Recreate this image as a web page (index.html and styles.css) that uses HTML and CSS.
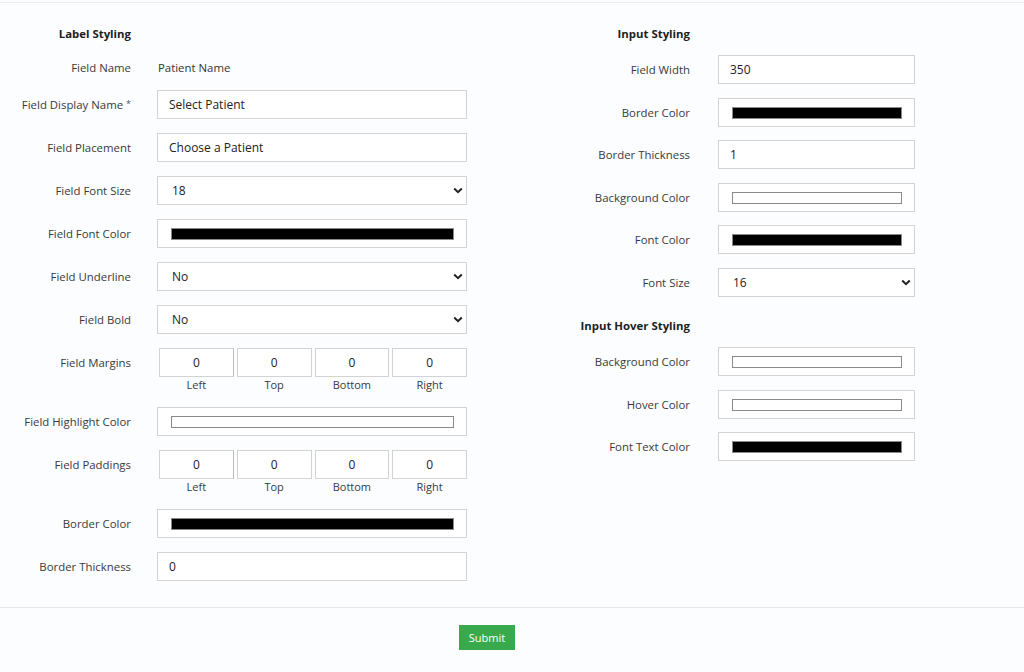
FILE: index.html
```html
<!DOCTYPE html>
<html lang="en">
<head>
    <meta charset="UTF-8">
    <title>Field Styling</title>
    <link rel="stylesheet" href="styles.css">
</head>
<body>
    <div class="page">
        <form class="styling-form">
            <div class="columns">
                <!-- label styling -->
                <div class="column left">
                    <div class="row heading-row">
                        <h3 class="heading">Label Styling</h3>
                    </div>
                    <div class="row name-row">
                        <label>Field Name</label>
                        <span class="static-value">Patient Name</span>
                    </div>
                    <div class="row">
                        <label>Field Display Name <span class="req">*</span></label>
                        <input type="text" class="text-input" value="Select Patient">
                    </div>
                    <div class="row">
                        <label>Field Placement</label>
                        <input type="text" class="text-input" value="Choose a Patient">
                    </div>
                    <div class="row">
                        <label>Field Font Size</label>
                        <div class="select-box">
                            <select><option>18</option></select>
                            <svg class="chevron" width="10" height="7" viewBox="0 0 10 7"><path d="M1.2 1.5 L5 5.2 L8.8 1.5" fill="none" stroke="#222" stroke-width="2"/></svg>
                        </div>
                    </div>
                    <div class="row">
                        <label>Field Font Color</label>
                        <div class="color-box"><div class="swatch black"></div></div>
                    </div>
                    <div class="row">
                        <label>Field Underline</label>
                        <div class="select-box">
                            <select><option>No</option></select>
                            <svg class="chevron" width="10" height="7" viewBox="0 0 10 7"><path d="M1.2 1.5 L5 5.2 L8.8 1.5" fill="none" stroke="#222" stroke-width="2"/></svg>
                        </div>
                    </div>
                    <div class="row">
                        <label>Field Bold</label>
                        <div class="select-box">
                            <select><option>No</option></select>
                            <svg class="chevron" width="10" height="7" viewBox="0 0 10 7"><path d="M1.2 1.5 L5 5.2 L8.8 1.5" fill="none" stroke="#222" stroke-width="2"/></svg>
                        </div>
                    </div>
                    <div class="row multi-row">
                        <label>Field Margins</label>
                        <div class="quad">
                            <div class="quad-item"><input type="text" class="quad-input" value="0"><span>Left</span></div>
                            <div class="quad-item"><input type="text" class="quad-input" value="0"><span>Top</span></div>
                            <div class="quad-item"><input type="text" class="quad-input" value="0"><span>Bottom</span></div>
                            <div class="quad-item"><input type="text" class="quad-input" value="0"><span>Right</span></div>
                        </div>
                    </div>
                    <div class="row">
                        <label>Field Highlight Color</label>
                        <div class="color-box"><div class="swatch white"></div></div>
                    </div>
                    <div class="row multi-row">
                        <label>Field Paddings</label>
                        <div class="quad">
                            <div class="quad-item"><input type="text" class="quad-input" value="0"><span>Left</span></div>
                            <div class="quad-item"><input type="text" class="quad-input" value="0"><span>Top</span></div>
                            <div class="quad-item"><input type="text" class="quad-input" value="0"><span>Bottom</span></div>
                            <div class="quad-item"><input type="text" class="quad-input" value="0"><span>Right</span></div>
                        </div>
                    </div>
                    <div class="row">
                        <label>Border Color</label>
                        <div class="color-box"><div class="swatch black"></div></div>
                    </div>
                    <div class="row">
                        <label>Border Thickness</label>
                        <input type="text" class="text-input" value="0">
                    </div>
                </div>

                <!-- input styling -->
                <div class="column right">
                    <div class="row heading-row">
                        <h3 class="heading">Input Styling</h3>
                    </div>
                    <div class="row">
                        <label>Field Width</label>
                        <input type="text" class="text-input" value="350">
                    </div>
                    <div class="row">
                        <label>Border Color</label>
                        <div class="color-box"><div class="swatch black"></div></div>
                    </div>
                    <div class="row">
                        <label>Border Thickness</label>
                        <input type="text" class="text-input" value="1">
                    </div>
                    <div class="row">
                        <label>Background Color</label>
                        <div class="color-box"><div class="swatch white"></div></div>
                    </div>
                    <div class="row">
                        <label>Font Color</label>
                        <div class="color-box"><div class="swatch black"></div></div>
                    </div>
                    <div class="row">
                        <label>Font Size</label>
                        <div class="select-box">
                            <select><option>16</option></select>
                            <svg class="chevron" width="10" height="7" viewBox="0 0 10 7"><path d="M1.2 1.5 L5 5.2 L8.8 1.5" fill="none" stroke="#222" stroke-width="2"/></svg>
                        </div>
                    </div>
                    <div class="row heading-row sub-heading">
                        <h3 class="heading">Input Hover Styling</h3>
                    </div>
                    <div class="row">
                        <label>Background Color</label>
                        <div class="color-box"><div class="swatch white"></div></div>
                    </div>
                    <div class="row">
                        <label>Hover Color</label>
                        <div class="color-box"><div class="swatch white"></div></div>
                    </div>
                    <div class="row">
                        <label>Font Text Color</label>
                        <div class="color-box"><div class="swatch black"></div></div>
                    </div>
                </div>
            </div>

            <div class="form-footer">
                <button type="button" class="submit-btn">Submit</button>
            </div>
        </form>
    </div>
</body>
</html>
```

FILE: styles.css
```css
* {
    box-sizing: border-box;
}

body {
    margin: 0;
    background: #fbfdfe;
    font-family: 'Open Sans', 'Noto Sans', sans-serif;
    font-size: 11.4px;
    color: #333;
}

.page {
    margin-top: 2px;
    border-top: 1px solid #eceff1;
    min-height: 670px;
}

.columns {
    display: grid;
    grid-template-columns: 467px 355px;
    column-gap: 93px;
    padding-top: 19px;
}

.column.left {
    --label-w: 131px;
    --field-w: 310px;
    --gap: 26px;
    --row-space: 14px;
}

.column.right {
    --label-w: 130px;
    --field-w: 197px;
    --gap: 28px;
    --row-space: 13.5px;
}

.row {
    display: grid;
    grid-template-columns: var(--label-w) var(--field-w);
    column-gap: var(--gap);
    align-items: center;
    margin-bottom: var(--row-space);
}

.row label {
    text-align: right;
    color: #3a3a3a;
    line-height: 29px;
    white-space: nowrap;
}

.req {
    font-size: 9px;
    vertical-align: 2px;
    color: #555;
}

.heading-row {
    height: 24px;
    margin-bottom: 9px;
}

.sub-heading {
    height: 28px;
    padding-top: 4px;
}

.heading {
    margin: 0;
    text-align: right;
    font-size: 11.4px;
    font-weight: 700;
    color: #1e1e1e;
    line-height: 24px;
}

.name-row {
    height: 25px;
    margin-bottom: 9px;
}

.name-row label {
    line-height: 25px;
}

.static-value {
    color: #333;
    padding-left: 1px;
}

.text-input,
.select-box select,
.quad-input {
    font-family: 'Open Sans', 'Noto Sans', sans-serif;
    font-size: 12px;
    color: #222;
    background: #fff;
    border: 1px solid #d3d3d3;
    border-radius: 0;
    height: 29px;
    outline: none;
}

.text-input {
    width: 100%;
    padding: 0 11px;
}

.select-box {
    position: relative;
    width: 100%;
}

.select-box select {
    width: 100%;
    padding: 0 14px;
    -webkit-appearance: none;
    appearance: none;
}

.chevron {
    position: absolute;
    right: 4px;
    top: 11px;
    pointer-events: none;
}

.color-box {
    height: 29px;
    background: #fff;
    border: 1px solid #d3d3d3;
    padding: 8px 12px 0 13px;
}

.swatch {
    height: 12px;
    border: 1px solid #8a8a8a;
}

.swatch.black {
    background: #000;
}

.swatch.white {
    background: #fff;
}

.multi-row {
    align-items: start;
}

.quad {
    display: grid;
    grid-template-columns: repeat(4, 1fr);
    column-gap: 3px;
    padding-left: 2px;
}

.quad-item {
    display: flex;
    flex-direction: column;
    align-items: center;
}

.quad-input {
    width: 100%;
    text-align: center;
    padding: 0;
}

.quad-item span {
    font-size: 11px;
    line-height: 16px;
    color: #3a3a3a;
}

.quad-item:first-child .quad-input {
    border-right-color: #bbb;
}

.form-footer {
    margin-top: 12px;
    border-top: 1px solid #e6e8ea;
    padding: 17px 0 20px 459px;
}

.submit-btn {
    background: #39aa4b;
    color: #fff;
    border: none;
    border-radius: 0;
    width: 56px;
    height: 25px;
    font-family: 'Open Sans', 'Noto Sans', sans-serif;
    font-size: 11px;
    padding: 0;
    cursor: pointer;
}
```
